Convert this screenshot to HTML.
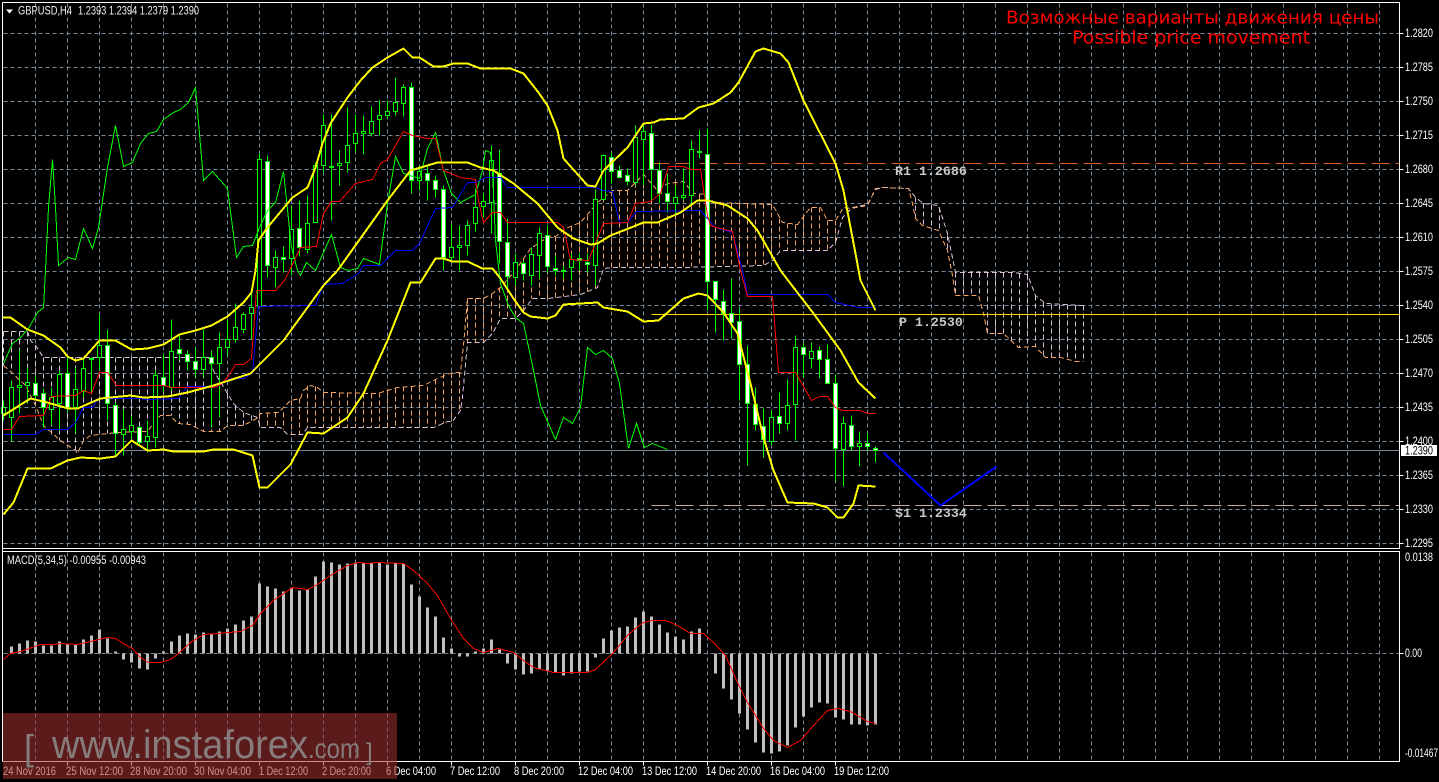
<!DOCTYPE html>
<html><head><meta charset="utf-8"><title>GBPUSD H4</title>
<style>html,body{margin:0;padding:0;background:#000;width:1439px;height:782px;overflow:hidden}svg{display:block}</style>
</head><body>
<svg xmlns="http://www.w3.org/2000/svg" width="1439" height="782" viewBox="0 0 1439 782">
<rect width="1439" height="782" fill="#000"/>
<g transform="translate(.5 .5)" fill="none" shape-rendering="crispEdges">
<!-- grid -->
<path stroke="#778899" stroke-dasharray="4 3" d="M3 33H1399M3 67H1399M3 101H1399M3 135H1399M3 169H1399M3 203H1399M3 237H1399M3 271H1399M3 305H1399M3 339H1399M3 373H1399M3 407H1399M3 441H1399M3 475H1399M3 509H1399M3 543H1399"/>
<path stroke="#778899" stroke-dasharray="4 3" d="M35 3V547M67 3V547M99 3V547M131 3V547M163 3V547M195 3V547M227 3V547M259 3V547M291 3V547M323 3V547M355 3V547M387 3V547M419 3V547M451 3V547M483 3V547M515 3V547M547 3V547M579 3V547M611 3V547M643 3V547M675 3V547M707 3V547M739 3V547M771 3V547M803 3V547M835 3V547M867 3V547M899 3V547M931 3V547M963 3V547M995 3V547M1027 3V547M1059 3V547M1091 3V547M1123 3V547M1155 3V547M1187 3V547M1219 3V547M1251 3V547M1283 3V547M1315 3V547M1347 3V547M1379 3V547"/>
<path stroke="#778899" stroke-dasharray="4 3" d="M35 552V760M67 552V760M99 552V760M131 552V760M163 552V760M195 552V760M227 552V760M259 552V760M291 552V760M323 552V760M355 552V760M387 552V760M419 552V760M451 552V760M483 552V760M515 552V760M547 552V760M579 552V760M611 552V760M643 552V760M675 552V760M707 552V760M739 552V760M771 552V760M803 552V760M835 552V760M867 552V760M899 552V760M931 552V760M963 552V760M995 552V760M1027 552V760M1059 552V760M1091 552V760M1123 552V760M1155 552V760M1187 552V760M1219 552V760M1251 552V760M1283 552V760M1315 552V760M1347 552V760M1379 552V760"/>
<!-- kumo hatch -->
<path stroke="#d8bfd8" stroke-dasharray="5 3" d="M3 331V365M11 331V372M19 331V380M27 331V387M35 345V405M43 357V425M51 357V434M59 357V440M67 357V445M75 357V451M83 357V440M91 357V435M99 357V433M107 357V433M115 357V432M123 357V432M131 357V432M139 357V431M147 357V431M155 357V420M163 357V415M171 357V415M179 357V423M187 357V424M195 357V428M203 357V431M211 365V431M219 380V431M227 393V425M235 405V425M243 412V425M251 415V420M915 197V218M923 203V225M931 204V228M939 207V231M947 235V250M955 272V295M963 272V295M971 272V295M979 272V297M987 272V333M995 272V333M1003 272V333M1011 272V343M1019 273V347M1027 274V347M1035 295V346M1043 302V355M1051 304V357M1059 304V357M1067 304V358M1075 305V361M1083 305V361"/>
<path stroke="#f4a460" stroke-dasharray="5 3" d="M259 413V427M267 412V427M275 412V427M283 412V429M291 400V434M299 398V434M307 385V427M315 386V427M323 392V427M331 392V427M339 392V427M347 392V427M355 392V427M363 393V427M371 393V427M379 392V427M387 390V427M395 388V427M403 386V427M411 386V427M419 386V427M427 386V427M435 379V426M443 373V423M451 372V421M459 372V411M467 298V342M475 298V342M483 298V342M491 293V333M499 287V318M507 279V318M515 270V318M523 258V310M531 247V298M539 242V298M547 237V298M555 236V297M563 229V296M571 226V295M579 222V294M587 215V291M595 204V288M603 197V268M611 190V267M619 190V267M627 190V266M635 182V266M643 174V266M651 183V266M659 189V266M667 183V266M675 182V266M683 181V266M691 190V266M699 194V266M707 194V266M715 203V266M723 203V265M731 203V265M739 203V265M747 203V265M755 203V265M763 203V265M771 204V260M779 218V252M787 223V250M795 224V250M803 215V250M811 207V250M819 207V250M827 220V250M835 220V242"/>
<!-- kumo envelopes -->
<path stroke="#d8bfd8" stroke-dasharray="5 3" d="M3 331H27L30 340L35 345L43 357H208L213 370L227 393L233 403L243 412L257 417L260 427H280L287 434H302L307 427H433L447 421H452L460 410L462 397L467 342H483L492 333L500 318H515L523 310L532 298H548L580 294L597 287L603 268L613 267H683L763 265L772 260L780 250H827L835 242L842 217L852 207L867 204L875 189L883 187L908 188L915 197L923 203L938 205L947 233L955 272H1013L1027 274L1035 295L1045 303L1083 305"/>
<path stroke="#f4a460" stroke-dasharray="5 3" d="M3 365L11 372L25 385L35 405L43 425L60 440L75 450L77 453L83 440L90 435L117 432L147 431L155 420L160 415H170L177 423L190 424L203 431H220L227 425H243L258 417L260 413L278 412L290 400L300 398L303 390L310 385L317 387L323 392L377 393L397 387L423 385L437 378L452 372H460L463 345L467 298H483L492 293L500 287L515 270L523 258L530 248L547 237L555 236L565 228L580 222L597 202L612 190H627L643 174L657 190L667 183L683 181L693 193L707 194L713 202L772 204L782 222L797 224L810 207H820L827 220H835L843 207L850 208L867 205L875 188L883 187L908 188L912 203L915 218L922 225L938 230L947 250L952 275L955 295H978L983 313L987 333H1003L1018 347L1035 346L1045 357H1060L1075 361H1083"/>
<!-- pivots -->
<path stroke="#d9591f" stroke-dasharray="18 6" d="M651 163H1399"/>
<path stroke="#ffd000" d="M651 314H1399"/>
<path stroke="#c8a8a4" stroke-dasharray="18 6" d="M651 505H1399"/>
<path stroke="#778899" d="M3 450H1399"/>
<!-- wicks -->
<path stroke="#00ff00" d="M3 400V420M11 380V441M19 349V413M27 367V403M35 375V400M43 388V427M51 387V425M59 370V430M67 357V412M75 367V433M83 357V397M91 358V393M99 314V370M107 329V420M115 402V455M123 409V455M131 416V437M139 426V444M147 420V452M155 370V447M163 353V392M171 319V390M179 335V360M187 350V370M195 347V377M203 329V377M211 350V427M219 332V417M227 320V355M235 303V342M243 312V333M251 290V339M259 153V303M267 155V277M275 250V287M283 246V272M291 205V275M299 200V256M307 195V253M315 162V222M323 114V172M331 114V220M339 150V185M347 107V172M355 114V151M363 115V154M371 106V136M379 100V135M387 100V118M395 77V115M403 84V116M411 82V193M419 165V190M427 165V200M435 175V197M443 185V270M451 224V262M459 225V270M467 220V255M475 188V231M483 193V217M491 145V233M499 149V263M507 218V290M515 253V285M523 260V280M531 247V285M539 227V278M547 225V272M555 255V275M563 265V278M571 253V280M579 253V270M587 253V272M595 189V285M603 154V200M611 152V183M619 165V178M627 168V185M635 125V185M643 124V185M651 124V200M659 162V203M667 173V212M675 185V215M683 168V200M691 140V205M699 130V158M707 128V310M715 281V332M723 289V340M731 278V338M739 308V400M747 345V465M755 387V430M763 408V457M771 410V445M779 392V433M787 379V430M795 335V440M803 342V377M811 342V368M819 346V378M827 344V383M835 374V481M843 416V486M851 415V450M859 431V466M867 433V450M875 446V462"/>
<!-- hollow bodies -->
<path stroke="#00ff00" fill="#000" d="M1 407h4v6h-4zM9 387h4v30h-4zM17 385h4v2h-4zM25 382h4v3h-4zM49 397h4v12h-4zM57 374h4v29h-4zM73 389h4v18h-4zM81 368h4v23h-4zM89 358h4v1h-4zM97 345h4v12h-4zM121 429h4v5h-4zM129 425h4v6h-4zM145 436h4v5h-4zM153 375h4v62h-4zM169 351h4v36h-4zM201 357h4v12h-4zM217 347h4v16h-4zM225 339h4v8h-4zM233 327h4v12h-4zM241 314h4v15h-4zM249 307h4v6h-4zM257 159h4v147h-4zM273 257h4v10h-4zM289 229h4v29h-4zM305 223h4v26h-4zM313 165h4v57h-4zM321 125h4v40h-4zM329 166h4v1h-4zM337 163h4v2h-4zM345 145h4v17h-4zM353 133h4v10h-4zM361 131h4v2h-4zM369 121h4v12h-4zM377 115h4v4h-4zM385 111h4v4h-4zM393 102h4v9h-4zM401 87h4v16h-4zM417 171h4v9h-4zM449 247h4v10h-4zM457 245h4v2h-4zM465 225h4v20h-4zM473 207h4v16h-4zM481 201h4v5h-4zM489 160h4v42h-4zM513 262h4v15h-4zM529 254h4v21h-4zM537 233h4v22h-4zM561 270h4v1h-4zM569 259h4v8h-4zM593 199h4v66h-4zM601 155h4v44h-4zM633 137h4v45h-4zM641 131h4v8h-4zM673 197h4v6h-4zM681 195h4v2h-4zM689 149h4v46h-4zM769 417h4v24h-4zM785 405h4v18h-4zM793 347h4v57h-4zM809 351h4v7h-4zM841 423h4v26h-4zM857 443h4v3h-4z"/>
<!-- filled bodies -->
<path stroke="#00ff00" fill="#fff" d="M33 383h4v12h-4zM41 393h4v14h-4zM65 373h4v34h-4zM105 345h4v58h-4zM113 405h4v28h-4zM137 427h4v15h-4zM161 377h4v8h-4zM177 349h4v4h-4zM185 354h4v7h-4zM193 361h4v8h-4zM209 357h4v6h-4zM265 161h4v104h-4zM281 257h4v2h-4zM297 228h4v19h-4zM409 87h4v93h-4zM425 173h4v7h-4zM433 180h4v9h-4zM441 189h4v68h-4zM497 173h4v68h-4zM505 242h4v34h-4zM521 263h4v10h-4zM545 235h4v31h-4zM553 268h4v2h-4zM577 258h4v2h-4zM585 262h4v2h-4zM609 157h4v14h-4zM617 170h4v7h-4zM625 175h4v6h-4zM649 133h4v36h-4zM657 170h4v23h-4zM665 193h4v8h-4zM697 151h4v1h-4zM705 154h4v127h-4zM713 281h4v18h-4zM721 301h4v12h-4zM729 313h4v9h-4zM737 321h4v43h-4zM745 364h4v39h-4zM753 404h4v20h-4zM761 426h4v13h-4zM777 416h4v7h-4zM801 347h4v7h-4zM817 350h4v9h-4zM825 359h4v24h-4zM833 383h4v65h-4zM849 425h4v21h-4zM865 443h4v3h-4zM873 448h4v2h-4z"/>
<!-- chikou -->
<path stroke="#00ff00" d="M3 363L12 343L20 337L28 328L37 312L43 307L45 270L48 207L52 159L55 207L58 265L68 257L75 259L83 228L92 248L98 227L107 167L115 125L123 166L132 162L140 143L148 133L156 131L163 119L173 112L180 109L188 102L195 87L203 180L212 171L227 188L236 257L243 246L252 245L259 227L267 210L275 202L283 171L291 247L297 270L300 275L306 262L315 270L331 234L340 267L348 270L357 268L363 258L379 264L387 203L395 156L403 173L419 178L427 148L435 132L443 170L451 193L460 202L475 194L482 170L485 150L490 152L492 170L495 240L500 283L508 305L515 317L523 323L532 365L540 405L555 439L563 417L572 423L580 407L587 347L595 354L603 350L612 358L619 383L628 448L636 423L644 447L652 443L667 449"/>
<!-- kijun -->
<path stroke="#0000ff" d="M3 434H35L43 429H67L75 422L83 407H92L98 398H140L147 399L178 398L187 386H217L230 378H243L252 372L258 306L315 305L323 284L342 283L358 273L363 265H380L395 250H412L419 243L435 208L452 207L467 182H475L485 177H500L507 187H595L602 190L612 191L619 222H627L636 211L700 210L707 218L715 227L732 232L742 270L747 294H827L835 302L858 307H875"/>
<!-- tenkan -->
<path stroke="#ff0000" d="M3 429H11L19 416L43 415L51 396L75 395L83 390L91 393L99 372H107L116 385H163L172 387H212L219 385L227 377L235 364H243L251 358L256 290H275L284 280L289 270L300 247L316 246L323 213L331 201H339L355 183L372 179L380 163L387 159L403 131L412 135L427 138H435L443 170L460 177L475 179L478 200L483 222L492 212H500L507 222H557L563 227L570 259L588 260L603 223L627 222L635 203L650 201L660 193L668 166H683L690 169H700L707 215L710 225L716 227L732 231L740 270L747 296H772L778 372H795L811 400L819 396H827L835 407L842 410H860L867 413H875"/>
<!-- bollinger -->
<g stroke="#ffff00" stroke-width="2" stroke-linejoin="round">
<path d="M2 317H10L27 329L43 335L60 347L67 356L75 360L83 358L99 340H115L131 349L147 348L163 344L179 334L195 330L211 325L227 316L243 302L251 292L255 270L258 240L267 227L287 203L292 197L307 187L315 167L322 143L330 123L347 97L360 80L372 67L387 57L403 48L412 57H419L433 66H443L453 63H467L480 68H510L523 73L538 92L547 105L557 130L563 158L580 177L587 185L595 186L603 170L627 147L643 123L653 122L660 119L683 118L698 107L713 103L730 92L738 82L755 51L763 48L780 53L788 62L803 100L835 163L843 190L855 253L860 280L875 310"/>
<path d="M3 415L30 398L43 401L68 408H77L100 398L130 395L143 397L167 396L187 392L213 385L250 373L263 360L283 340L323 285L337 270L387 200L410 170L437 162H467L480 167L493 170L513 183L537 203L557 227L573 238L590 244L597 243L610 235L623 230L643 222H657L680 212L697 200H707L727 205L747 218L757 230L780 270L813 313L840 350L858 382L875 398"/>
<path d="M3 514L13 502L27 468H50L67 460L80 457L100 458L115 456L131 440L147 450L163 449L173 451H203L213 449H233L252 455L259 487H267L290 464L307 432L323 433L347 417L363 393L387 340L410 282H420L435 258H443L452 261H467L482 268H492L500 278L513 298L523 312L530 316L547 318L555 315L563 304L580 303L597 302L603 307L627 311L643 321L658 320L683 298L698 293L707 295L723 312L737 333L750 383L763 437L773 470L787 502L813 503L827 507L837 517H843L853 503L858 485L875 486"/>
</g>
<!-- blue hand-drawn -->
<path stroke="#0000ff" stroke-width="2" d="M883 452L940 505L996 466"/>
<!-- MACD hist -->
<path stroke="#777f8f" stroke-dasharray="4 3" d="M3 653H1399"/>
<path stroke="#c0c0c0" stroke-width="3" d="M11 653V646M19 653V643M27 653V640M35 653V641M43 653V645M51 653V645M59 653V641M67 653V644M75 653V644M83 653V639M91 653V635M99 653V629M107 653V638M115 653V651M123 653V659M131 653V662M139 653V668M147 653V669M155 653V658M163 653V651M171 653V641M179 653V635M187 653V633M195 653V634M203 653V632M211 653V634M219 653V631M227 653V628M235 653V624M243 653V620M251 653V616M259 653V583M267 653V586M275 653V588M283 653V591M291 653V587M299 653V590M307 653V589M315 653V576M323 653V561M331 653V562M339 653V564M347 653V563M355 653V562M363 653V563M371 653V562M379 653V562M387 653V564M395 653V563M403 653V563M411 653V584M419 653V596M427 653V607M435 653V616M443 653V637M451 653V648M459 653V656M467 653V656M475 653V651M483 653V648M491 653V639M499 653V649M507 653V663M515 653V669M523 653V674M531 653V673M539 653V669M547 653V670M555 653V672M563 653V675M571 653V673M579 653V671M587 653V671M595 653V657M603 653V638M611 653V630M619 653V627M627 653V626M635 653V617M643 653V611M651 653V616M659 653V624M667 653V632M675 653V636M683 653V639M691 653V631M699 653V628M715 653V673M723 653V688M731 653V699M739 653V713M747 653V729M755 653V742M763 653V752M771 653V753M779 653V751M787 653V745M795 653V727M803 653V716M811 653V707M819 653V702M827 653V703M835 653V717M843 653V719M851 653V724M859 653V724M867 653V725M875 653V724"/>
<path stroke="#ff0000" d="M3 659L10 653L20 651L40 644H53L60 643L77 644L90 641L107 637L115 638L123 643L132 648L140 657L148 662L160 662L170 659L178 653L190 642L203 634L217 633L240 631L252 625L260 613L273 600L292 587L307 589L317 584L330 575L347 565L358 562L367 563L377 562L403 563L413 570L427 583L437 595L450 618L463 638L473 648L483 652L498 648L513 652L523 660L533 667L553 672L587 672L595 669L612 653L627 635L635 628L643 622L652 620L665 620L677 625L690 633L703 633L713 642L725 655L737 682L747 702L763 728L773 740L787 747L800 740L813 725L827 710L837 708L850 711L867 721L875 723"/>
<!-- frame -->
<path stroke="#fff" d="M2 2H1399V548H2M2 551H1399V761H2M2 2V761"/>
<!-- axis ticks -->
<path stroke="#fff" d="M1399 33h4M1399 67h4M1399 101h4M1399 135h4M1399 169h4M1399 203h4M1399 237h4M1399 271h4M1399 305h4M1399 339h4M1399 373h4M1399 407h4M1399 441h4M1399 475h4M1399 509h4M1399 543h4M1399 653h4M67 761v4M131 761v4M195 761v4M259 761v4M323 761v4M387 761v4M451 761v4M515 761v4M579 761v4M643 761v4M707 761v4M771 761v4M835 761v4"/>
</g>
<!-- header -->
<path d="M6 9.5h7l-3.5 4z" fill="#fff"/>
<g font-family="'Liberation Sans',sans-serif" font-size="11.5" fill="#f2f2f2">
<text x="18" y="14.5" textLength="54" lengthAdjust="spacingAndGlyphs">GBPUSD,H4</text>
<text x="78" y="14.5" textLength="121" lengthAdjust="spacingAndGlyphs">1.2393 1.2394 1.2379 1.2390</text>
<text x="7" y="564" textLength="139" lengthAdjust="spacingAndGlyphs">MACD(5,34,5) -0.00955 -0.00943</text>
</g>
<!-- title -->
<g font-family="'DejaVu Sans','Liberation Sans',sans-serif" font-size="18" fill="#ff0000">
<text x="1006" y="23.5" textLength="373" lengthAdjust="spacingAndGlyphs">Возможные варианты движения цены</text>
<text x="1072" y="43.5" textLength="238" lengthAdjust="spacingAndGlyphs">Possible price movement</text>
</g>
<!-- pivot labels -->
<g font-family="'Liberation Mono','DejaVu Sans Mono',monospace" font-size="13.3" font-weight="700" fill="#c8c8c8">
<text x="895" y="175">R1 1.2686</text>
<text x="899" y="326">P 1.2530</text>
<text x="895" y="517">S1 1.2334</text>
</g>
<!-- price axis -->
<g font-family="'Liberation Sans',sans-serif" font-size="11.5" fill="#ffffff" lengthAdjust="spacingAndGlyphs">
<text x="1405" y="37" textLength="28" lengthAdjust="spacingAndGlyphs">1.2820</text>
<text x="1405" y="71" textLength="28" lengthAdjust="spacingAndGlyphs">1.2785</text>
<text x="1405" y="105" textLength="28" lengthAdjust="spacingAndGlyphs">1.2750</text>
<text x="1405" y="139" textLength="28" lengthAdjust="spacingAndGlyphs">1.2715</text>
<text x="1405" y="173" textLength="28" lengthAdjust="spacingAndGlyphs">1.2680</text>
<text x="1405" y="207" textLength="28" lengthAdjust="spacingAndGlyphs">1.2645</text>
<text x="1405" y="241" textLength="28" lengthAdjust="spacingAndGlyphs">1.2610</text>
<text x="1405" y="275" textLength="28" lengthAdjust="spacingAndGlyphs">1.2575</text>
<text x="1405" y="309" textLength="28" lengthAdjust="spacingAndGlyphs">1.2540</text>
<text x="1405" y="343" textLength="28" lengthAdjust="spacingAndGlyphs">1.2505</text>
<text x="1405" y="377" textLength="28" lengthAdjust="spacingAndGlyphs">1.2470</text>
<text x="1405" y="411" textLength="28" lengthAdjust="spacingAndGlyphs">1.2435</text>
<text x="1405" y="445" textLength="28" lengthAdjust="spacingAndGlyphs">1.2400</text>
<text x="1405" y="479" textLength="28" lengthAdjust="spacingAndGlyphs">1.2365</text>
<text x="1405" y="513" textLength="28" lengthAdjust="spacingAndGlyphs">1.2330</text>
<text x="1405" y="547" textLength="28" lengthAdjust="spacingAndGlyphs">1.2295</text>
<text x="1405" y="561" textLength="28" lengthAdjust="spacingAndGlyphs">0.0138</text>
<text x="1405" y="657" textLength="17" lengthAdjust="spacingAndGlyphs">0.00</text>
<text x="1405" y="757" textLength="33" lengthAdjust="spacingAndGlyphs">-0.01467</text>
</g>
<rect x="1401" y="445" width="36" height="11" fill="#fff"/>
<text x="1405" y="454.5" font-family="'Liberation Sans',sans-serif" font-size="11.5" fill="#000" textLength="28" lengthAdjust="spacingAndGlyphs">1.2390</text>
<!-- time axis -->
<g font-family="'Liberation Sans',sans-serif" font-size="11.5" fill="#ffffff">
<text x="3" y="775" textLength="53" lengthAdjust="spacingAndGlyphs">24 Nov 2016</text>
<text x="66" y="775" textLength="57" lengthAdjust="spacingAndGlyphs">25 Nov 12:00</text>
<text x="130" y="775" textLength="57" lengthAdjust="spacingAndGlyphs">28 Nov 20:00</text>
<text x="194" y="775" textLength="57" lengthAdjust="spacingAndGlyphs">30 Nov 04:00</text>
<text x="259" y="775" textLength="49" lengthAdjust="spacingAndGlyphs">1 Dec 12:00</text>
<text x="322" y="775" textLength="49" lengthAdjust="spacingAndGlyphs">2 Dec 20:00</text>
<text x="386" y="775" textLength="50" lengthAdjust="spacingAndGlyphs">6 Dec 04:00</text>
<text x="450" y="775" textLength="50" lengthAdjust="spacingAndGlyphs">7 Dec 12:00</text>
<text x="514" y="775" textLength="50" lengthAdjust="spacingAndGlyphs">8 Dec 20:00</text>
<text x="578" y="775" textLength="55" lengthAdjust="spacingAndGlyphs">12 Dec 04:00</text>
<text x="642" y="775" textLength="55" lengthAdjust="spacingAndGlyphs">13 Dec 12:00</text>
<text x="706" y="775" textLength="55" lengthAdjust="spacingAndGlyphs">14 Dec 20:00</text>
<text x="770" y="775" textLength="55" lengthAdjust="spacingAndGlyphs">16 Dec 04:00</text>
<text x="834" y="775" textLength="55" lengthAdjust="spacingAndGlyphs">19 Dec 12:00</text>
</g>
<!-- watermark -->
<rect x="3" y="713" width="394" height="66" fill="#a53232" fill-opacity=".55"/>
<g font-family="'Liberation Sans',sans-serif" fill="#877c7c">
<text x="24" y="760" font-size="36">[</text>
<text x="52" y="758" font-size="40" textLength="256" lengthAdjust="spacingAndGlyphs">www.instaforex</text>
<text x="308" y="758" font-size="28" textLength="52" lengthAdjust="spacingAndGlyphs">.com</text>
<text x="366" y="760" font-size="24">]</text>
</g>
</svg>
</body></html>
